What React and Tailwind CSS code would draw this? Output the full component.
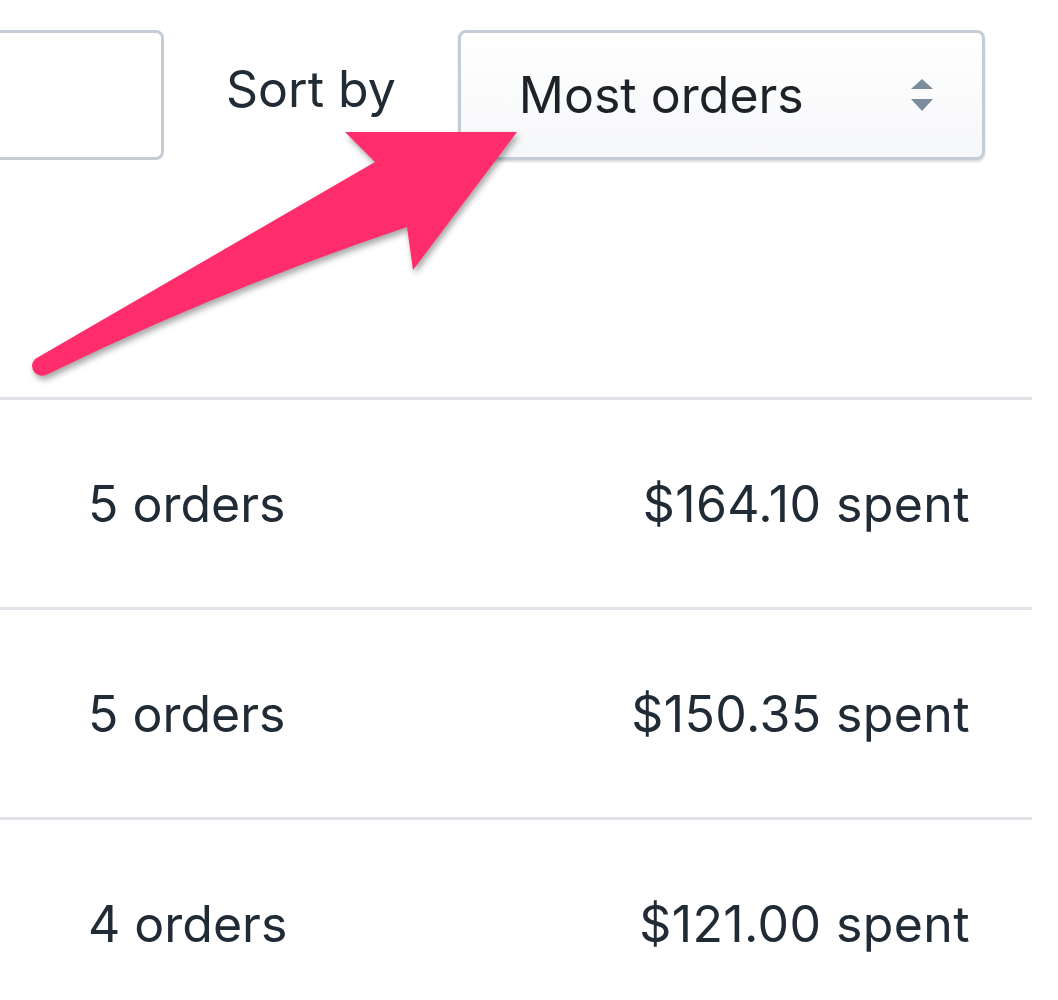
import React from 'react';

const rows = [
  { orders: '5 orders', spent: '$164.10 spent' },
  { orders: '5 orders', spent: '$150.35 spent' },
  { orders: '4 orders', spent: '$121.00 spent' },
];

function SelectArrows() {
  return (
    <svg width="22" height="32" viewBox="0 0 22 32" className="shrink-0">
      <path d="M11 0 L22 10 L0 10 Z" fill="#7b8c9c" />
      <path d="M0 20 L22 20 L11 32 Z" fill="#7b8c9c" />
    </svg>
  );
}

function PointerArrow() {
  // annotation arrow drawn over the screenshot
  return (
    <svg
      width="1058"
      height="1000"
      viewBox="0 0 1058 1000"
      className="absolute left-0 top-0 pointer-events-none"
      style={{ filter: 'drop-shadow(2px 4px 3px rgba(0,0,0,0.35))' }}
    >
      <path
        d="M517 132 L345 132 L375 162 L35 359 Q29 366 35 373 Q41 378 48 374 Q225 288 407 227 L413 270 Z"
        fill="#ff2d6b"
      />
    </svg>
  );
}

export default function App() {
  return (
    <div
      className="relative w-[1058px] h-[1000px] overflow-hidden bg-white text-[#212b36]"
      style={{ fontFamily: 'Inter, "Noto Sans", sans-serif' }}
    >
      {/* toolbar */}
      <div className="flex items-start pt-[30px] h-[397px]">
        <div className="-ml-[20px] w-[184px] h-[130px] rounded-[8px] border-[3px] border-[#c4cdd5] bg-white" />
        <div className="ml-[62px] h-[130px] flex items-center text-[50px] leading-none pb-[12px]">
          Sort by
        </div>
        <div className="ml-[62px] w-[527px] h-[130px] rounded-[8px] border-[3px] border-[#c4cdd5] bg-gradient-to-b from-white to-[#f6f7f9] shadow-[0_2px_2px_rgba(99,115,129,0.25)] flex items-center justify-between pl-[58px] pr-[49px]">
          <span className="text-[50px] leading-none text-[#1c2227]">Most orders</span>
          <SelectArrows />
        </div>
      </div>

      {/* customer rows */}
      <div className="w-[1032px]">
        {rows.map((r, i) => (
          <div
            key={i}
            className="h-[210px] border-t-[3px] border-[#dfe3e8] flex items-center justify-between pl-[88px] pr-[62px] text-[50px] leading-none"
          >
            <span>{r.orders}</span>
            <span className="tracking-[0.4px]">{r.spent}</span>
          </div>
        ))}
      </div>

      <PointerArrow />
    </div>
  );
}
